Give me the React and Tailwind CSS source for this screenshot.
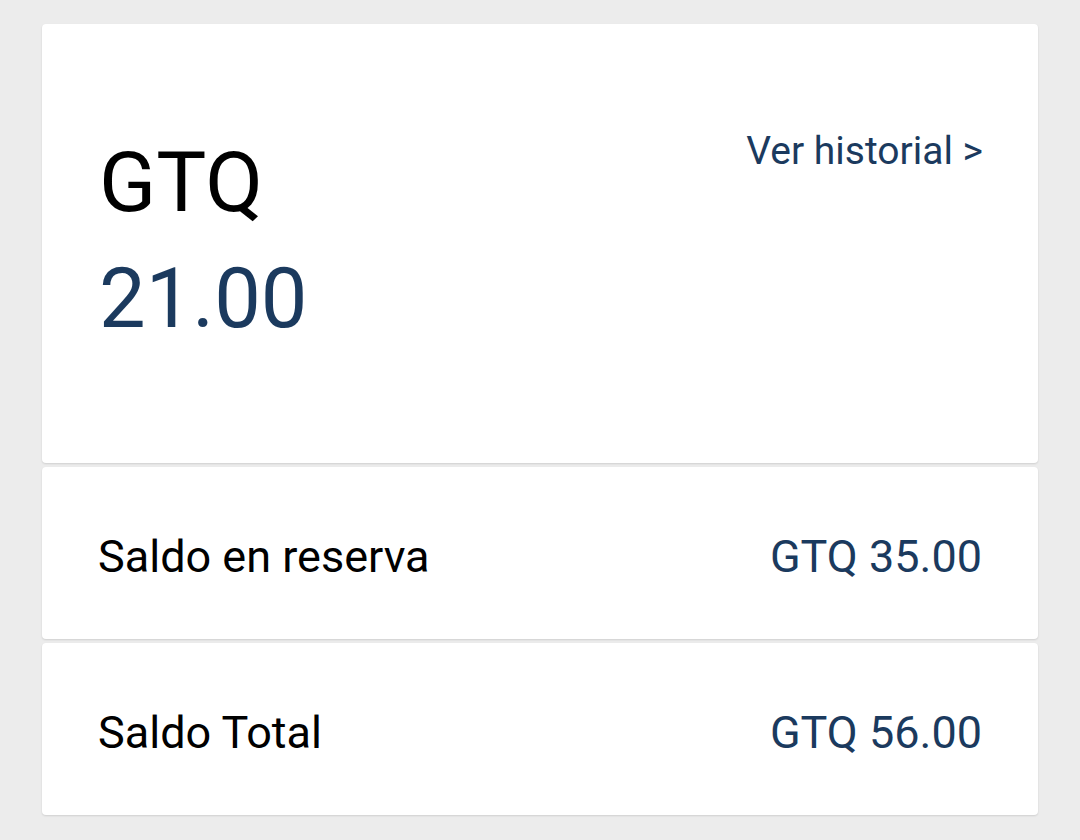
export default function App() {
  const rows = [
    { label: 'Saldo en reserva', value: 'GTQ 35.00' },
    { label: 'Saldo Total', value: 'GTQ 56.00' },
  ]

  return (
    <div className="min-h-[840px] bg-[#ececec] px-[42px] pt-[24px] font-['Roboto',sans-serif]">
      <div className="flex flex-col gap-[4px]">
        <div className="h-[439px] bg-white rounded-[4px] shadow-[0_1px_2px_rgba(0,0,0,0.12)] flex justify-between pl-[57px] pr-[55px]">
          <div className="pt-[117px]">
            <div className="text-[84px] leading-none text-black">GTQ</div>
            <div className="mt-[32px] text-[83px] leading-none text-[#1b3a5e]">21.00</div>
          </div>
          <div className="pt-[108px]">
            <button className="text-[39px] leading-none text-[#1b3a5e]">Ver historial &gt;</button>
          </div>
        </div>
        {rows.map(r => (
          <div
            key={r.label}
            className="h-[172px] bg-white rounded-[4px] shadow-[0_1px_2px_rgba(0,0,0,0.12)] flex items-center justify-between pl-[56px] pr-[56px] pt-[6px]"
          >
            <span className="text-[45px] leading-none text-black">{r.label}</span>
            <span className="text-[45px] leading-none text-[#1b3a5e]">{r.value}</span>
          </div>
        ))}
      </div>
    </div>
  )
}
